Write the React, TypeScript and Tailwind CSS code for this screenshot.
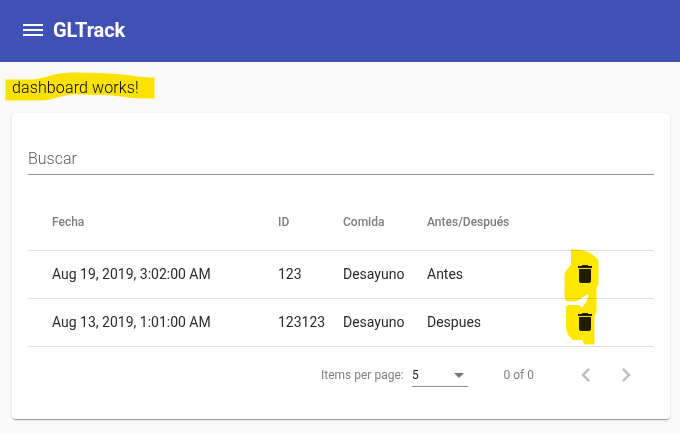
const rows = [
  { date: "Aug 19, 2019, 3:02:00 AM", id: "123", meal: "Desayuno", moment: "Antes" },
  { date: "Aug 13, 2019, 1:01:00 AM", id: "123123", meal: "Desayuno", moment: "Despues" },
];

const grid = "grid grid-cols-[226px_65px_84px_146px_1fr] items-center border-b border-[#e0e0e0] pl-6";

function TrashIcon() {
  return (
    <svg className="size-6" viewBox="0 0 24 24" fill="#212121">
      <path d="M6 19c0 1.1.9 2 2 2h8c1.1 0 2-.9 2-2V7H6v12zM19 4h-3.5l-1-1h-5l-1 1H5v2h14V4z" />
    </svg>
  );
}

function Chevron({ d }: { d: string }) {
  return (
    <svg className="size-7" viewBox="0 0 24 24" fill="#bdbdbd">
      <path d={d} />
    </svg>
  );
}

/* Marker strokes laid over the heading and the delete buttons */
function Highlights() {
  return (
    <svg className="pointer-events-none absolute top-0 left-0 mix-blend-multiply" width="680" height="433" viewBox="0 0 680 433" fill="#ffe800">
      <path d="M5.5 79.5H34C46 78 53 73 72 72.5C92 72.5 104 73.500 117 74C132 75 140 77.500 154.500 77.500V98.500H141C125 98 116 95 103 95C88 95.500 79 93 68 95C58 97 51 100.500 41 100.500H5.500Z" />
      <path d="M571 249.500H576C587 250 593 254 598.500 260V284L596.500 288V311L594.500 317V344.500H586C583.500 344.500 583 342 582.500 340H573C569 337 566 332 566 327V307C567 305 568 305 570 305H578C580 305 581 307 582 308C585 304 588 300 588.500 294C583 296 579 301.500 574 301.500H567C565 301 564.500 296 564.500 290V276C565 270 568 269 571 265Z" />
    </svg>
  );
}

export default function App() {
  return (
    <div className="relative h-[433px] w-[680px] overflow-hidden bg-[#fafafa] font-[Roboto,sans-serif] text-[#2b2b2b]">
      <header className="flex h-[62px] items-center bg-[#3f51b5] pl-[23px] text-white">
        <svg className="mr-2.5 -mt-0.5" width="20" height="12" viewBox="0 0 20 12" fill="currentColor">
          <path d="M0 0h20v2H0zM0 5h20v2H0zM0 10h20v2H0z" />
        </svg>
        <h1 className="-mt-0.5 text-xl leading-8 font-bold tracking-[-0.1px]">GLTrack</h1>
      </header>

      <p className="mt-[14px] ml-3 h-[37px] text-base leading-6 font-light tracking-[0.12px] text-black">dashboard works!</p>

      <main className="mr-[10px] ml-3 h-[306px] rounded bg-white px-4 pt-[34px] shadow-[0_2px_1px_-1px_rgba(0,0,0,0.2),0_1px_1px_0_rgba(0,0,0,0.14),0_1px_3px_0_rgba(0,0,0,0.12)]">
        <div className="h-7 border-b border-[#949494] text-base leading-6 font-light text-[#5c5c5c]">Buscar</div>

        <div className={`${grid} mt-[19px] h-[57px] text-xs font-medium text-[#7d7d7d]`}>
          <span>Fecha</span>
          <span>ID</span>
          <span>Comida</span>
          <span>Antes/Después</span>
        </div>
        {rows.map((row) => (
          <div key={row.id} className={`${grid} h-12 pb-px text-sm`}>
            <span>{row.date}</span>
            <span>{row.id}</span>
            <span>{row.meal}</span>
            <span>{row.moment}</span>
            <TrashIcon />
          </div>
        ))}

        <div className="flex h-14 items-center pl-[293px] text-xs text-[#808080]">
          <span className="w-[91px]">Items per page:</span>
          <div className="flex h-[23px] w-14 items-center justify-between border-b border-[#949494] pr-1 text-[#212121]">
            <span>5</span>
            <svg className="mt-0.5" width="10" height="5" viewBox="0 0 10 5" fill="#757575">
              <path d="M0 0h10L5 5z" />
            </svg>
          </div>
          <span className="ml-[35.5px] w-[68.5px]">0 of 0</span>
          <Chevron d="M15.41 7.41L14 6l-6 6 6 6 1.410-1.410L10.830 12z" />
          <span className="w-3" />
          <Chevron d="M10 6L8.590 7.410 13.170 12l-4.580 4.590L10 18l6-6z" />
        </div>
      </main>

      <Highlights />
    </div>
  );
}
